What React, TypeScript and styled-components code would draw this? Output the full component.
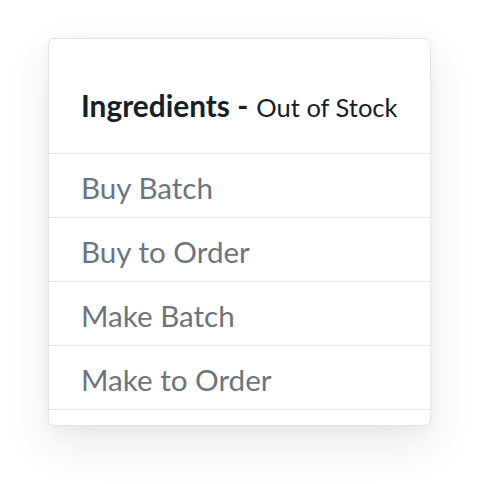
import React from "react";
import styled, { createGlobalStyle } from "styled-components";

const Global = createGlobalStyle`
  html, body { margin: 0; padding: 0; background: #ffffff; }
  body { font-family: Lato, "Noto Sans", sans-serif; }
`;

const Page = styled.div`
  box-sizing: border-box;
  width: 480px;
  height: 484px;
  padding: 38px 0 0 48px;
  overflow: hidden;
`;

const Card = styled.div`
  width: 383px;
  box-sizing: border-box;
  background: #ffffff;
  border: 1px solid #e2e6e9;
  border-radius: 6px;
  box-shadow: 0 18px 44px rgba(30, 40, 60, 0.1), 0 2px 10px rgba(30, 40, 60, 0.04);
  overflow: hidden;
  padding-bottom: 15px;
`;

const Header = styled.div`
  height: 115px;
  box-sizing: border-box;
  padding: 0 32px 29px;
  display: flex;
  align-items: flex-end;
  border-bottom: 1px solid #e4e7ea;
  color: #15202d;
  white-space: nowrap;
`;

const Title = styled.span`
  font-weight: 700;
  font-size: 29.8px;
  line-height: 1.2;
`;

const Sub = styled.span`
  font-weight: 400;
  font-size: 25.5px;
  line-height: 1.2;
  margin-left: 8px;
  padding-bottom: 1px;
`;

const Row = styled.div`
  height: 64px;
  box-sizing: border-box;
  padding: 3px 32px 0;
  display: flex;
  align-items: center;
  border-bottom: 1px solid #e4e7ea;
  color: #6c757d;
  font-size: 29.6px;
  font-weight: 400;
`;

const items = ["Buy Batch", "Buy to Order", "Make Batch", "Make to Order"];

export default function App() {
  return (
    <>
      <Global />
      <Page>
        <Card>
          <Header>
            <Title>Ingredients -</Title>
            <Sub>Out of Stock</Sub>
          </Header>
          {items.map((t) => (
            <Row key={t}>{t}</Row>
          ))}
        </Card>
      </Page>
    </>
  );
}
